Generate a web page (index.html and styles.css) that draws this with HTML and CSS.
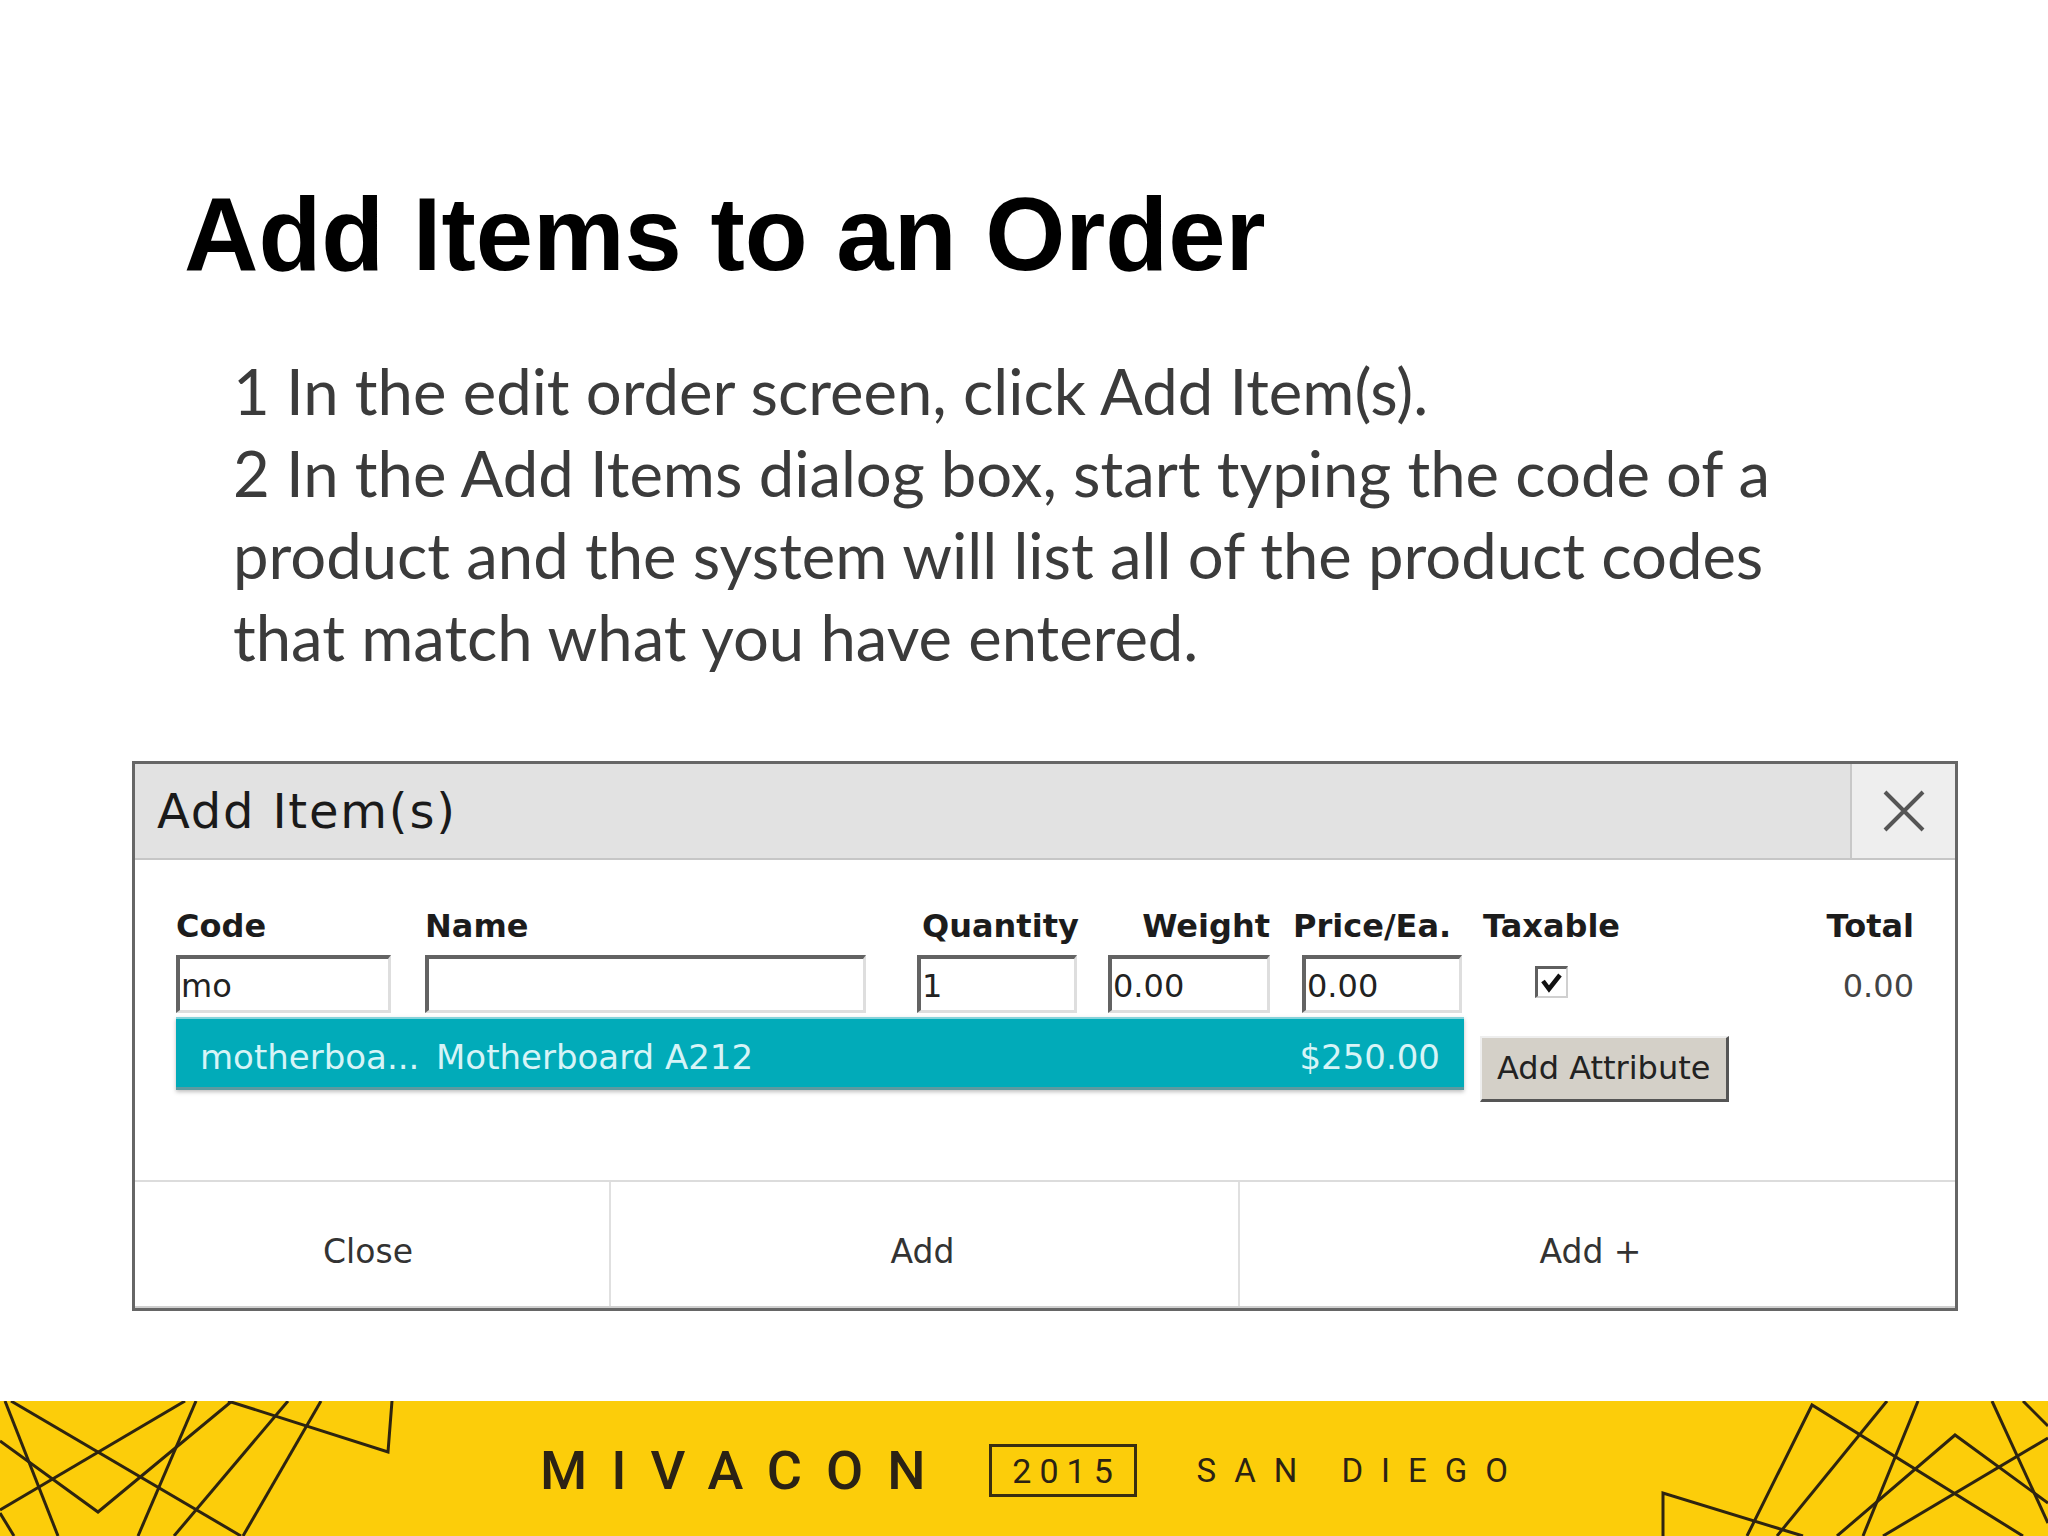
FILE: index.html
```html
<!DOCTYPE html>
<html lang="en">
<head>
<meta charset="utf-8">
<title>Add Items to an Order</title>
<link rel="stylesheet" href="styles.css">
</head>
<body>
<div class="slide">
  <h1 class="title">Add Items to an Order</h1>
  <p class="intro">1 In the edit order screen, click Add Item(s).<br>2 In the Add Items dialog box, start typing the code of a<br>product and the system will list all of the product codes<br>that match what you have entered.</p>

  <div class="dialog">
    <div class="dlg-head">
      <div class="dlg-title">Add Item(s)</div>
      <div class="dlg-close">
        <svg width="44" height="44" viewBox="0 0 44 44"><path d="M3 3 L41 41 M41 3 L3 41" stroke="#555" stroke-width="4" fill="none"/></svg>
      </div>
    </div>
    <div class="dlg-body">
      <div class="fields">
        <div class="field f-code">
          <div class="lbl">Code</div>
          <div class="inp">mo</div>
        </div>
        <div class="field f-name">
          <div class="lbl">Name</div>
          <div class="inp"></div>
        </div>
        <div class="field f-qty">
          <div class="lbl">Quantity</div>
          <div class="inp">1</div>
        </div>
        <div class="field f-weight">
          <div class="lbl">Weight</div>
          <div class="inp">0.00</div>
        </div>
        <div class="field f-price">
          <div class="lbl">Price/Ea.</div>
          <div class="inp">0.00</div>
        </div>
        <div class="field f-tax">
          <div class="lbl">Taxable</div>
          <div class="chk">
            <svg width="28" height="27" viewBox="0 0 28 27"><polyline points="5,12 11,20 22,6" stroke="#111" stroke-width="4.5" fill="none"/></svg>
          </div>
        </div>
        <div class="field f-total">
          <div class="lbl">Total</div>
          <div class="val">0.00</div>
        </div>
      </div>
      <div class="row2">
        <div class="btn-attr">Add Attribute</div>
      </div>
      <div class="suggest">
        <span class="s-code">motherboa...</span>
        <span class="s-name">Motherboard A212</span>
        <span class="s-price">$250.00</span>
      </div>
    </div>
    <div class="dlg-foot">
      <div class="fbtn fb-close">Close</div>
      <div class="fbtn fb-add">Add</div>
      <div class="fbtn fb-addplus">Add +</div>
    </div>
  </div>

  <div class="banner">
    <svg class="deco" width="2048" height="135" viewBox="0 0 2048 135">
      <g stroke="#2e2410" stroke-width="3" fill="none">
        <path d="M11 0 L241 135"/>
        <path d="M0 109 L185 0"/>
        <path d="M0 40 L98 111 L232 0"/>
        <path d="M5 0 L58 135"/>
        <path d="M196 0 L138 135"/>
        <path d="M288 0 L174 135"/>
        <path d="M321 0 L243 135"/>
        <path d="M228 0 L388 51 L392 0"/>
        <path d="M0 112 L14 135"/>
        <path d="M1803 135 L1663 92 L1663 135"/>
        <path d="M1747 135 L1812 4 L2023 135"/>
        <path d="M1887 0 L1777 135"/>
        <path d="M1918 0 L1863 135"/>
        <path d="M1837 135 L1955 34 L2048 102"/>
        <path d="M2048 37 L1883 135"/>
        <path d="M1992 0 L2048 122"/>
        <path d="M2023 0 L2048 25"/>
      </g>
    </svg>
    <div class="logo">
      <span class="mivacon">MIVACON</span>
      <span class="year">2015</span>
      <span class="city">SAN DIEGO</span>
    </div>
  </div>
</div>
</body>
</html>
```

FILE: styles.css
```css
html, body {
  margin: 0;
  padding: 0;
  background: #ffffff;
}

.slide {
  width: 2048px;
  height: 1536px;
  position: relative;
  overflow: hidden;
  display: flex;
  flex-direction: column;
  background: #ffffff;
}

.title {
  margin: 184px 0 0 0;
  padding-left: 184px;
  font-family: "Liberation Sans", Arial, sans-serif;
  font-weight: bold;
  font-size: 103px;
  line-height: 102px;
  color: #000000;
}

.intro {
  margin: 64px 0 0 0;
  padding-left: 233px;
  font-family: Lato, "Open Sans", sans-serif;
  font-size: 63.4px;
  line-height: 82px;
  color: #3b3b3b;
  white-space: nowrap;
}

/* dialog */
.dialog {
  margin: 83px 0 0 132px;
  width: 1826px;
  box-sizing: border-box;
  border: 3px solid #666666;
  background: #ffffff;
  font-family: "DejaVu Sans", Verdana, sans-serif;
}

.dlg-head {
  display: flex;
  height: 94px;
  background: #e2e2e2;
  border-bottom: 2px solid #c6c6c6;
}

.dlg-title {
  flex: 1;
  padding-left: 22px;
  font-size: 48px;
  line-height: 94px;
  letter-spacing: 1.8px;
  color: #1a1a1a;
}

.dlg-close {
  width: 103px;
  border-left: 2px solid #c8c8c8;
  background: #eeeeee;
  display: flex;
  align-items: center;
  justify-content: center;
}

.dlg-body {
  position: relative;
  height: 320px;
  box-sizing: border-box;
  padding: 47px 41px 0 41px;
}

.fields {
  display: flex;
  align-items: flex-start;
}

.field {
  display: flex;
  flex-direction: column;
  flex-shrink: 0;
}

.lbl {
  font-weight: bold;
  font-size: 32px;
  line-height: 38px;
  height: 38px;
  color: #1c1c1c;
  white-space: nowrap;
  margin-bottom: 10px;
}

.inp {
  height: 58px;
  box-sizing: border-box;
  border-top: 4px solid #636363;
  border-left: 4px solid #636363;
  border-right: 3px solid #dedede;
  border-bottom: 3px solid #dedede;
  background: #ffffff;
  font-size: 32px;
  line-height: 48px;
  padding: 3px 0 0 1px;
  color: #222222;
  white-space: nowrap;
}

.f-code { width: 215px; }
.f-name { width: 441px; margin-left: 34px; }
.f-qty { width: 160px; margin-left: 51px; }
.f-qty .lbl { padding-left: 5px; }
.f-weight { width: 162px; margin-left: 31px; }
.f-weight .lbl { text-align: right; }
.f-price { width: 171px; margin-left: 23px; }
.f-price .inp { width: 160px; margin-left: 9px; }
.f-tax { width: 143px; margin-left: 16px; align-items: center; }
.f-total { margin-left: auto; align-items: flex-end; }

.chk {
  width: 33px;
  height: 32px;
  box-sizing: border-box;
  margin-top: 11px;
  border-top: 3px solid #5f5f5f;
  border-left: 3px solid #5f5f5f;
  border-right: 2px solid #d0d0d0;
  border-bottom: 2px solid #d0d0d0;
  background: #ffffff;
  display: flex;
  align-items: center;
  justify-content: center;
}

.val {
  font-size: 32px;
  line-height: 58px;
  padding-top: 2px;
  color: #444444;
}

.row2 {
  margin-top: 21px;
  padding-left: 1304px;
  display: flex;
}

.btn-attr {
  width: 249px;
  height: 66px;
  box-sizing: border-box;
  background: #d4d0c8;
  border-top: 2px solid #eeeeee;
  border-left: 2px solid #eeeeee;
  border-right: 3px solid #555555;
  border-bottom: 3px solid #555555;
  font-size: 32px;
  line-height: 60px;
  padding-left: 15px;
  color: #222222;
  white-space: nowrap;
}

.suggest {
  position: absolute;
  left: 41px;
  top: 157px;
  width: 1288px;
  height: 73px;
  box-sizing: border-box;
  padding-top: 8px;
  background: #01abb9;
  border-top: 2px solid #86d3da;
  border-bottom: 3px solid #5c9aa0;
  box-shadow: 0 2px 4px rgba(0, 0, 0, 0.25);
  display: flex;
  align-items: center;
  font-size: 34px;
  color: #d6f4f7;
  white-space: nowrap;
}

.s-code {
  width: 236px;
  padding-left: 24px;
  box-sizing: border-box;
}

.s-name {
  flex: 1;
  padding-left: 24px;
}

.s-price {
  padding-right: 24px;
}

.dlg-foot {
  display: flex;
  height: 128px;
  box-sizing: border-box;
  border-top: 2px solid #dcdcdc;
  border-bottom: 2px solid #cfcfcf;
}

.fbtn {
  display: flex;
  align-items: center;
  justify-content: center;
  box-sizing: border-box;
  padding-top: 14px;
  font-size: 33px;
  color: #333333;
}

.fb-close { width: 474px; padding-right: 8px; }
.fb-add { width: 629px; border-left: 2px solid #e0e0e0; padding-right: 4px; }
.fb-addplus { flex: 1; border-left: 2px solid #e0e0e0; padding-right: 14px; }

/* banner */
.banner {
  margin-top: auto;
  height: 135px;
  background: #fccd0a;
  position: relative;
  display: flex;
  align-items: center;
  justify-content: center;
}

.deco {
  position: absolute;
  left: 0;
  top: 0;
}

.logo {
  position: relative;
  display: flex;
  align-items: center;
  font-family: Roboto, "Liberation Sans", sans-serif;
  color: #2b2214;
  margin-top: 4px;
}

.mivacon {
  font-size: 54px;
  font-weight: 500;
  letter-spacing: 24px;
  margin-right: -24px;
}

.year {
  margin-left: 63px;
  width: 148px;
  height: 53px;
  box-sizing: border-box;
  border: 3px solid #3a2e10;
  display: flex;
  align-items: center;
  justify-content: center;
  font-size: 34px;
  letter-spacing: 8px;
  padding-left: 8px;
}

.city {
  margin-left: 60px;
  font-size: 33px;
  letter-spacing: 18px;
  margin-right: -18px;
}
```
